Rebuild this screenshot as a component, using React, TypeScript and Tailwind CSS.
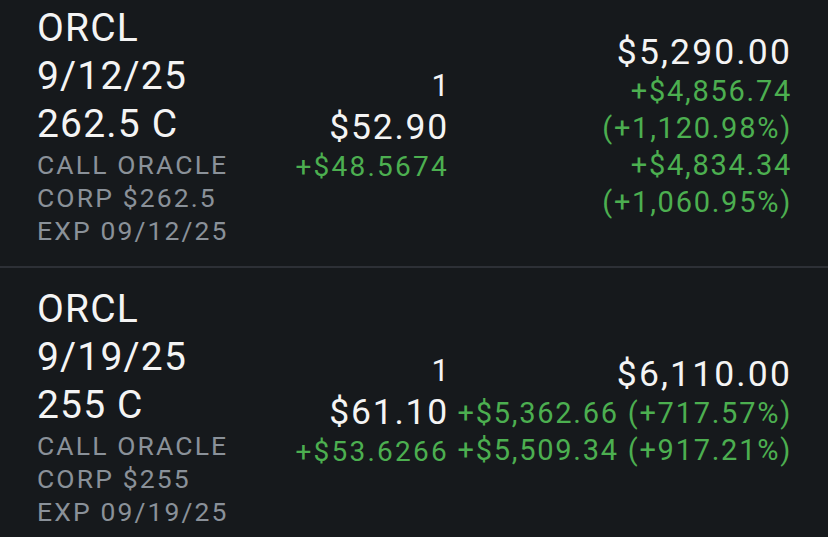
import React from "react";

type Pos = {
  sym: string;
  date: string;
  strike: string;
  desc: string[];
  qty: string;
  price: string;
  chg: string;
  value: string;
  gains: string[];
};

const rows: Pos[] = [
  {
    sym: "ORCL",
    date: "9/12/25",
    strike: "262.5 C",
    desc: ["CALL ORACLE", "CORP $262.5", "EXP 09/12/25"],
    qty: "1",
    price: "$52.90",
    chg: "+$48.5674",
    value: "$5,290.00",
    gains: ["+$4,856.74", "(+1,120.98%)", "+$4,834.34", "(+1,060.95%)"],
  },
  {
    sym: "ORCL",
    date: "9/19/25",
    strike: "255 C",
    desc: ["CALL ORACLE", "CORP $255", "EXP 09/19/25"],
    qty: "1",
    price: "$61.10",
    chg: "+$53.6266",
    value: "$6,110.00",
    gains: ["+$5,362.66 (+717.57%)", "+$5,509.34 (+917.21%)"],
  },
];

function Row({ p, first }: { p: Pos; first?: boolean }) {
  return (
    <div
      className={
        first
          ? "flex items-center pl-[37px] pr-[36px] pt-[18px] pb-[19px]"
          : "flex items-center pl-[37px] pr-[36px] pt-[17px] pb-[19px]"
      }
    >
      <div className="w-[250px] shrink-0">
        {[p.sym, p.date, p.strike].map((t, i) => (
          <div
            key={i}
            className="text-[39px] leading-[48px] tracking-[0.03em] text-[#f4f4f4] whitespace-nowrap"
          >
            {t}
          </div>
        ))}
        {p.desc.map((t, i) => (
          <div
            key={i}
            className="text-[26.5px] leading-[33px] tracking-[0.08em] text-[#8a9199] whitespace-nowrap"
          >
            {t}
          </div>
        ))}
      </div>
      <div className={first ? "flex min-w-0 flex-1 items-center" : "flex min-w-0 flex-1 items-center pt-[8px]"}>
        <div className="w-[162px] shrink-0 text-right">
          <div className="text-[31px] leading-[40px] text-[#f4f4f4]">{p.qty}</div>
          <div className="text-[35.5px] leading-[42px] tracking-[0.05em] text-[#f4f4f4]">
            {p.price}
          </div>
          <div className="text-[28px] leading-[38px] tracking-[0.08em] text-[#4caf50] whitespace-nowrap">
            {p.chg}
          </div>
        </div>
        <div className="ml-[8px] min-w-0 flex-1 text-right">
          <div className="text-[35.5px] leading-[42px] tracking-[0.06em] text-[#f4f4f4]">
            {p.value}
          </div>
          {p.gains.map((g, i) => (
            <div
              key={i}
              className="text-[29px] leading-[37px] tracking-[0.06em] text-[#4caf50] whitespace-nowrap"
            >
              {g}
            </div>
          ))}
        </div>
      </div>
    </div>
  );
}

export default function App() {
  return (
    <div className="h-[537px] w-[828px] overflow-hidden bg-[#16191c] font-['Roboto',sans-serif]">
      <div className="-mt-[14px]">
        <Row p={rows[0]} first />
        <div className="h-[2px] bg-[#2d3036]" />
        <Row p={rows[1]} />
      </div>
    </div>
  );
}
